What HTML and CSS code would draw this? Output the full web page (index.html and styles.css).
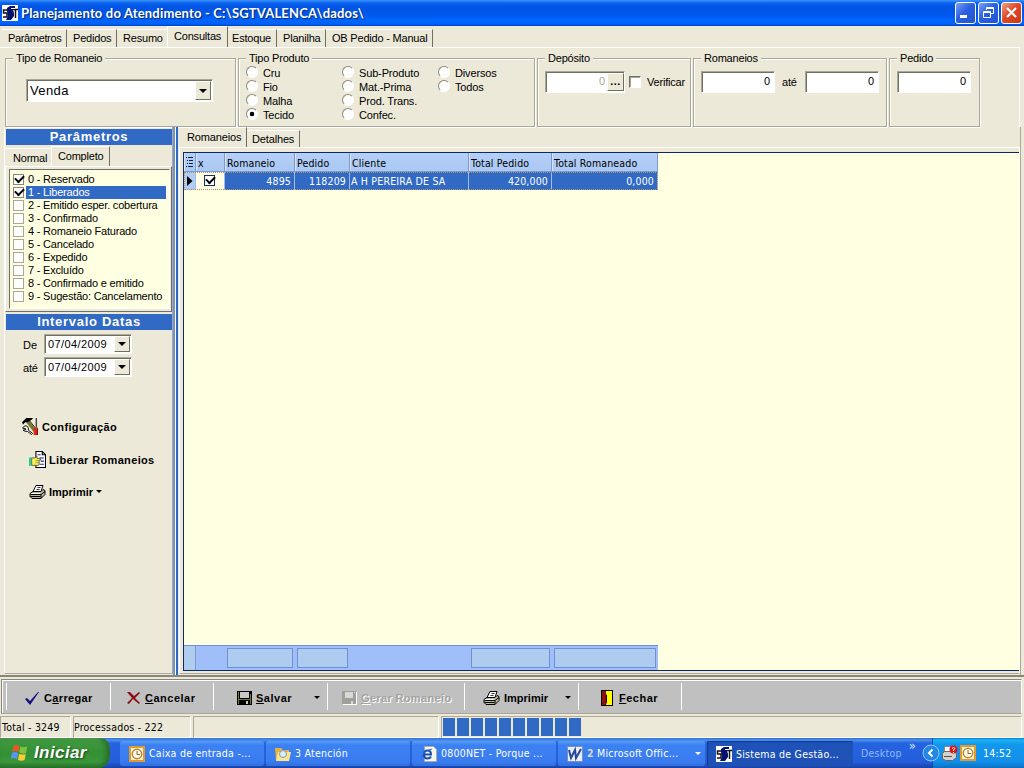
FILE: index.html
```html
<!doctype html>
<html lang="pt-BR">
  <head>
    <meta charset="UTF-8" />
    <meta name="viewport" content="width=device-width, initial-scale=1.0" />
    <title>Planejamento do Atendimento</title>
    <link rel="stylesheet" href="styles.css">
  </head>
  <body>
    <!-- símbolos reutilizados -->
    <svg class="defs" width="0" height="0">
      <symbol id="sgt" viewBox="0 0 16 16">
        <path fill="#fff" d="M0 0h16v16H0z" />
        <path fill="none" stroke="#101018" stroke-width="1.500" d="M5 5H1.500v3H5v4H1M11 4.500h5M13.500 4v9" />
        <path fill="#03106c" d="M5 3l3-2h5v3l-2 1 1 3v3l-3 4H4l1-2 1-2-1-5z" />
        <path stroke="#fff" d="M9 3.500h4" />
      </symbol>
      <symbol id="printer" viewBox="0 0 16 16">
        <path fill="#fff" stroke="#000" d="M6.500 1.500h7l-2 6h-8z" />
        <path stroke="#333" d="M8 3.500h3M7 5.500h3" />
        <path fill="#b9b8a8" stroke="#000" d="M.5 9.500l3-2h8l2-2 2 1v4l-4 4h-9l-2-2z" />
        <path fill="#fff" d="M2 9h9l-1 1H1z" />
        <path stroke="#000" fill="none" d="M1 10.500h10.500l4-3M11.500 10.500v4M1 12.500h10" />
        <path fill="#cc3" d="M8 11h2v1H8z" />
      </symbol>
      <symbol id="outlook" viewBox="0 0 16 16">
        <path fill="#fff3cf" stroke="#e09a2e" stroke-width="2" d="M1 1h14v14H1z" />
        <circle cx="8" cy="8" r="4.700" fill="#fffdf2" stroke="#b98432" stroke-width="1.500" />
        <path fill="none" stroke="#8a5a18" d="M8 5v3.500h3" />
      </symbol>
    </svg>

    <header class="titlebar">
      <svg class="app-icon" width="16" height="16"><use href="#sgt" /></svg>
      <h1>Planejamento do Atendimento - C:\SGTVALENCA\dados\</h1>
      <div class="win-buttons">
        <span class="win"><svg viewBox="0 0 19 19"><path fill="#fff" d="M4 12h7v3H4z" /></svg></span>
        <span class="win"><svg viewBox="0 0 19 19"><path fill="none" stroke="#fff" d="M7.500 7V4.500h7v6H12M7 5.500h8M4.500 8.500h7v6h-7zM4 9.500h8" /></svg></span>
        <span class="win close"><svg viewBox="0 0 19 19"><path stroke="#fff" stroke-width="2.200" d="M5 5l9 9M14 5l-9 9" /></svg></span>
      </div>
    </header>

    <nav class="main-tabs">
      <span class="t1">Parâmetros</span>
      <span class="t2">Pedidos</span>
      <span class="t3">Resumo</span>
      <span class="t4 on">Consultas</span>
      <span class="t5">Estoque</span>
      <span class="t6">Planilha</span>
      <span class="t7">OB Pedido - Manual</span>
    </nav>

    <section class="filters">
      <fieldset>
        <legend>Tipo de Romaneio</legend>
        <div class="combo big"><span>Venda</span><i class="drop"></i></div>
      </fieldset>
      <fieldset>
        <legend>Tipo Produto</legend>
        <div class="radios">
          <label><i></i>Cru</label>
          <label><i></i>Fio</label>
          <label><i></i>Malha</label>
          <label><i class="on"></i>Tecido</label>
          <label><i></i>Sub-Produto</label>
          <label><i></i>Mat.-Prima</label>
          <label><i></i>Prod. Trans.</label>
          <label><i></i>Confec.</label>
          <label><i></i>Diversos</label>
          <label><i></i>Todos</label>
        </div>
      </fieldset>
      <fieldset>
        <legend>Depósito</legend>
        <div class="fields">
          <div class="field dep"><span>0</span><b>...</b></div>
          <i class="box"></i>
          <span class="verif">Verificar</span>
        </div>
      </fieldset>
      <fieldset>
        <legend>Romaneios</legend>
        <div class="fields">
          <div class="field">0</div>
          <span class="ate">até</span>
          <div class="field">0</div>
        </div>
      </fieldset>
      <fieldset>
        <legend>Pedido</legend>
        <div class="fields"><div class="field">0</div></div>
      </fieldset>
    </section>

    <main class="work">
      <aside class="side">
        <h2>Parâmetros</h2>
        <nav class="side-tabs">
          <span>Normal</span>
          <span class="on">Completo</span>
        </nav>
        <div class="side-page">
          <ul class="checks">
            <li><i class="ok"></i><span>0 - Reservado</span></li>
            <li class="sel"><i class="ok"></i><span>1 - Liberados</span></li>
            <li><i></i><span>2 - Emitido esper. cobertura</span></li>
            <li><i></i><span>3 - Confirmado</span></li>
            <li><i></i><span>4 - Romaneio Faturado</span></li>
            <li><i></i><span>5 - Cancelado</span></li>
            <li><i></i><span>6 - Expedido</span></li>
            <li><i></i><span>7 - Excluído</span></li>
            <li><i></i><span>8 - Confirmado e emitido</span></li>
            <li><i></i><span>9 - Sugestão: Cancelamento</span></li>
          </ul>
        </div>
        <h2 class="second">Intervalo Datas</h2>
        <div class="dates">
          <span>De</span>
          <div class="combo"><span>07/04/2009</span><i class="drop"></i></div>
          <span>até</span>
          <div class="combo"><span>07/04/2009</span><i class="drop"></i></div>
        </div>
        <div class="actions">
          <div class="action cfg">
            <svg width="17" height="17" viewBox="0 0 16 16">
              <path stroke="#77772a" stroke-width="3" d="M5 3l7 9" />
              <path stroke="#000" stroke-width=".8" d="M7 2.500l6.500 8" />
              <path d="M0 4l4-4h6v1L7 3 5 4 3 4 1 6z" />
              <path stroke="#444" stroke-width="1.300" d="M13.500 0v9" />
              <path fill="#e02814" d="M11 9h4v7h-4z" />
              <path fill="#7c100a" d="M14 10h1v6h-1z" />
              <path fill="#fff" stroke="#000" stroke-width=".9" d="M.5 9.500l2-2h2l1.500 2v2l4 3-1 1-4-3H3l-2-1 2.500-.5V10z" />
            </svg>
            <span>Configuração</span>
          </div>
          <div class="action lib">
            <svg width="17" height="17" viewBox="0 0 16 16">
              <path fill="#fff" stroke="#000" d="M6.500.5h6l3 3v12h-9z" />
              <path fill="none" stroke="#000" d="M12.500.5v3h3" />
              <path stroke="#22a" d="M8 3.500h3M10 6.500h4M11 9.500h3M10 12.500h4" />
              <path fill="#f6f060" stroke="#55551a" stroke-width=".8" d="M2.500 6.500h3l2-1.500v2h3.500v1.500H9.500V13l-1 .5h-6z" />
              <path stroke="#88882a" stroke-width=".7" d="M6 9h3.500M6 11h3.500" />
              <path fill="#20d0a0" d="M0 6h2v8H0z" />
            </svg>
            <span>Liberar Romaneios</span>
          </div>
          <div class="action imp">
            <svg width="17" height="16"><use href="#printer" /></svg>
            <span>Imprimir</span><i class="arrow"></i>
          </div>
        </div>
      </aside>
      <div class="splitter"></div>

      <section class="content">
        <nav class="content-tabs">
          <span class="on">Romaneios</span>
          <span>Detalhes</span>
        </nav>
        <div class="content-page">
          <div class="grid">
            <div class="row head">
              <span class="ind"><svg width="8" height="10" viewBox="0 0 8 10"><path stroke="#123" d="M0 .5h1M2 .5h5M1 3.500h1M3 3.500h4M1 6.500h1M3 6.500h4M0 9.500h1M2 9.500h5" /></svg></span>
              <span class="c1">x</span>
              <span class="c2">Romaneio</span>
              <span class="c3">Pedido</span>
              <span class="c4">Cliente</span>
              <span class="c5">Total Pedido</span>
              <span class="c6">Total Romaneado</span>
            </div>
            <div class="row data">
              <span class="ind"><svg width="6" height="10" viewBox="0 0 6 10"><path d="M0 0l5.500 5L0 10z" /></svg></span>
              <span class="chk"><i class="ok"></i></span>
              <span class="num">4895</span>
              <span class="num c3">118209</span>
              <span class="cli">A H PEREIRA DE SA</span>
              <span class="num">420,000</span>
              <span class="num">0,000</span>
            </div>
            <div class="row foot">
              <span class="ind"></span>
              <span></span>
              <span><i></i></span>
              <span><i></i></span>
              <span></span>
              <span><i></i></span>
              <span><i></i></span>
            </div>
          </div>
        </div>
      </section>
    </main>

    <div class="toolbar">
      <div class="tool carregar">
        <svg width="15" height="14" viewBox="0 0 15 14"><path fill="#101080" d="M0 8l2-1 3 3 8-9 1 0-9 13z" /></svg>
        <span>C<u>a</u>rregar</span>
      </div>
      <div class="tool cancelar">
        <svg width="14" height="14" viewBox="0 0 14 14"><path fill="#8b0f16" d="M0 1h3l4 4 5-4 1 1-5 5 5 5-1 1-6-5-4 5-2-1 5-5z" /></svg>
        <span><u>C</u>ancelar</span>
      </div>
      <div class="tool salvar">
        <svg width="15" height="14" viewBox="0 0 15 14"><path d="M0 0h15v14H0z" /><path fill="#77772a" d="M1 1h1v12H1zM13 3h1v10h-1zM2 8h11v1H2z" /><path fill="#c8c8c8" d="M3 1h9v6H3zM9 10h2v3H9z" /></svg>
        <span><u>S</u>alvar</span><i class="arrow"></i>
      </div>
      <div class="tool gerar">
        <svg width="15" height="14" viewBox="0 0 15 14"><path fill="#fff" d="M1 1h14v13H1z" /><path fill="#a09f99" d="M0 0h14v13H0z" /><path fill="#d8d8d8" d="M3 1h8v6H3zM9 10h2v3H9zM12 1h1v1h-1z" /></svg>
        <span><u>G</u>erar Romaneio</span>
      </div>
      <div class="tool print">
        <svg width="17" height="16"><use href="#printer" /></svg>
        <span>Imprimir</span><i class="arrow"></i>
      </div>
      <div class="tool fechar">
        <svg width="12" height="16" viewBox="0 0 12 16"><path d="M0 0h12v16H0z" /><path fill="#ff0" d="M5 1h6v14H5z" /><path fill="#8b0f16" d="M1 1h4v3l1 1v8l-2 2H1z" /><path d="M5 5h1v7H5z" /></svg>
        <span><u>F</u>echar</span>
      </div>
    </div>

    <div class="statusbar">
      <span class="total">Total - 3249</span>
      <span class="proc">Processados - 222</span>
      <span></span>
      <div class="progress"><i></i><i></i><i></i><i></i><i></i><i></i><i></i><i></i><i></i><i></i></div>
    </div>

    <footer class="taskbar">
      <div class="start">
        <svg width="18" height="18" viewBox="0 0 18 18">
          <path fill="#e8572a" d="M3.500 2q3-2 6 0L8.500 8.300Q5.500 6 2.300 8z" />
          <path fill="#7cc33f" d="M10.300 2.500q3 1.500 7 0L16 9q-3 1.500-6.800-.5z" />
          <path fill="#5a94f4" d="M2 9q3-2 6.200.3L7 15.500Q4 13 .8 15z" />
          <path fill="#f8cc36" d="M9 9.700q3 1.500 6.800.3L14.600 16q-3 1.500-6.600 0z" />
        </svg>
        <span>Iniciar</span>
      </div>
      <div class="tasks">
        <div class="task"><svg width="16" height="16"><use href="#outlook" /></svg><span class="k1">Caixa de entrada -...</span></div>
        <div class="task">
          <svg width="16" height="16" viewBox="0 0 16 16"><path fill="#e5b23c" d="M0 2h6l2 2h6v10H1z" /><path fill="#fbe48a" d="M3 6h13l-2 9H1z" /><circle cx="8" cy="8" r="3.500" fill="#d9efff" stroke="#8298b4" /></svg>
          <span class="k2">3 Atención</span>
        </div>
        <div class="task">
          <svg width="16" height="16" viewBox="0 0 16 16"><path fill="#f7f6ea" stroke="#aaa" d="M3.500.5h9l3 3v12h-12z" /><path fill="none" stroke="#1550b0" stroke-width="2" d="M3 8.500h7q0-4-3.500-4T3 8.500q0 4 3.500 4 2.500 0 3.500-2" /><path fill="none" stroke="#2c70d0" d="M0 13Q1 5 11 3" /></svg>
          <span class="k3">0800NET - Porque ...</span>
        </div>
        <div class="task">
          <svg width="16" height="16" viewBox="0 0 16 16"><path fill="#e9eef8" stroke="#7890c0" d="M.5.5h15v15H.5z" /><path fill="none" stroke="#234a9c" stroke-width="2" d="M2 4l2 8 4-8 1 8 5-9" /></svg>
          <span class="k4"><b>2</b> Microsoft Offic...</span><i class="arrow"></i>
        </div>
        <div class="task active"><svg width="16" height="16"><use href="#sgt" /></svg><span class="k5">Sistema de Gestão...</span></div>
      </div>
      <div class="desk">Desktop<b>»</b></div>
      <div class="tray">
        <svg class="hide-btn" width="18" height="18" viewBox="0 0 18 18"><circle cx="9" cy="9" r="8" fill="#2487e6" stroke="#8fc8fa" /><path fill="none" stroke="#fff" stroke-width="2" d="M10.500 5.500L7 9l3.500 3.500" /></svg>
        <svg width="16" height="16" viewBox="0 0 16 16"><path fill="#fff" stroke="#888" d="M2.500 1.500h6v6h-6z" /><path fill="#d5d2cc" stroke="#666" d="M.5 8.500l2-2h9l3 2v4l-4 3h-7l-3-2z" /><path stroke="#555" d="M2 11.500h8" /><circle cx="11.500" cy="4.500" r="4" fill="#d81818" /><path fill="none" stroke="#fff" d="M10 3.500q1.500-2 3 0l-1.500 1.500v1M11.500 7v1" /></svg>
        <svg width="16" height="16"><use href="#outlook" /></svg>
        <span>14:52</span>
      </div>
    </footer>
  </body>
</html>
```

FILE: styles.css
```css
* {
  margin: 0;
  padding: 0;
  box-sizing: border-box;
}

body {
  width: 1024px;
  height: 768px;
  overflow: hidden;
  display: flex;
  flex-direction: column;
  background: #ece9d8;
  color: #000;
  font: 11px/14px 'Liberation Sans', Arial, sans-serif;
  letter-spacing: -0.2px;
  white-space: nowrap;
}

i {
  font-style: normal;
}

svg {
  display: block;
  flex: none;
}

.defs {
  position: absolute;
}

/* barra de título */
.titlebar {
  height: 26px;
  flex: none;
  display: flex;
  align-items: center;
  padding: 0 2px;
  background: linear-gradient(#3c94ff 0, #0a62ee 3px, #0054e3 7px, #0058ec 15px, #0066ff 21px, #0061f4 24px, #003fc8 26px);
}

.titlebar h1 {
  flex: 1;
  margin-left: 3px;
  color: #fff;
  font: bold 13px/18px Lato, sans-serif;
  letter-spacing: 0.18px;
  text-shadow: 1px 1px 1px #0a2a7a;
}

.win-buttons {
  display: flex;
  gap: 2px;
}

.win {
  width: 21px;
  height: 22px;
  border: 1px solid #fff;
  border-radius: 3px;
  background: linear-gradient(135deg, #7aa2f5, #2a5fe0 45%, #2356d0);
}

.win.close {
  background: linear-gradient(135deg, #f0a088, #e0492a 45%, #c83a14);
}

/* abas principais */
.main-tabs {
  height: 21px;
  flex: none;
  display: flex;
  align-items: flex-end;
  padding-left: 2px;
}

.main-tabs span {
  height: 18px;
  padding: 1px 0 0 6px;
  border-top: 1px solid #fff;
  border-right: 1px solid #716f64;
}

.main-tabs .on {
  height: 21px;
  padding-top: 2px;
  border-left: 1px solid #fff;
}

.t1 { width: 65px; letter-spacing: -0.35px; }
.t2 { width: 50px; }
.main-tabs .t3 { width: 50px; border-right: 0; }
.t4 { width: 61px; }
.main-tabs .t5 { width: 49px; padding-left: 4px; }
.t6 { width: 49px; }
.t7 { width: 107px; }

/* filtros */
.filters {
  height: 80px;
  flex: none;
  display: grid;
  grid-template-columns: 231px 297px 154px 194px 91px;
  column-gap: 2px;
  padding: 4px 0 0 5px;
  margin-right: 4px;
  border-top: 1px solid #fff;
  border-right: 1px solid #fff;
}

.filters fieldset {
  min-width: 0;
  height: 75px;
  border: 1px solid #aca899;
  box-shadow: 1px 1px 0 #fff, inset 1px 1px 0 #fff;
}

.filters legend {
  height: 13px;
  margin-left: 7px;
  padding: 0 3px;
  line-height: 12px;
  background: #ece9d8;
}

.combo {
  display: flex;
  width: 88px;
  height: 20px;
  background: #fff;
  border: 1px solid;
  border-color: #aca899 #fff #fff #aca899;
  box-shadow: inset 1px 1px 0 #716f64;
}

.combo span {
  flex: 1;
  padding: 2px 0 0 3px;
  letter-spacing: 0.4px;
}

.combo.big {
  width: 187px;
  height: 23px;
  margin: 14px 0 0 20px;
  font: 13px/17px 'Liberation Sans', Arial, sans-serif;
}

.drop {
  width: 16px;
  margin: 1px;
  display: flex;
  align-items: center;
  justify-content: center;
  background: #ece9d8;
  border: 1px solid;
  border-color: #fff #716f64 #716f64 #fff;
}

.drop::after,
.arrow {
  content: '';
  border: 4px solid transparent;
  border-top-color: #000;
  border-bottom: 0;
}

.radios {
  display: grid;
  grid-auto-flow: column;
  grid-template-rows: repeat(4, 14px);
  grid-template-columns: 96px 96px 90px;
  margin: 1px 0 0 7px;
  letter-spacing: -0.15px;
}

.radios label {
  display: flex;
  gap: 5px;
}

.radios i {
  width: 12px;
  height: 12px;
  border: 1px solid;
  border-color: #8a877a #fff #fff #8a877a;
  border-radius: 50%;
  background: #fff;
}

.radios i.on {
  background: radial-gradient(circle, #000 0 2px, #fff 2.6px);
}

.fields {
  display: flex;
  align-items: center;
  margin: 6px 0 0 7px;
}

.field {
  width: 74px;
  height: 22px;
  padding: 2px 4px 0 0;
  text-align: right;
  background: #fff;
  border: 1px solid;
  border-color: #aca899 #fff #fff #aca899;
  box-shadow: inset 1px 1px 0 #716f64;
}

.field.dep {
  display: flex;
  justify-content: flex-end;
  width: 80px;
  padding: 1px 0 0;
  color: #aca899;
}

.dep span {
  padding: 1px 2px 0 0;
}

.dep b {
  width: 17px;
  height: 18px;
  color: #000;
  text-align: center;
  letter-spacing: 0.5px;
  background: #ece9d8;
  border: 1px solid;
  border-color: #fff #716f64 #716f64 #fff;
}

.box {
  width: 12px;
  height: 12px;
  margin: 0 6px 0 4px;
  background: #fff;
  border: 1px solid;
  border-color: #716f64 #fff #fff #716f64;
  box-shadow: inset 1px 1px 0 #aca899;
}

.verif {
  padding-bottom: 1px;
}

.ate {
  width: 30px;
  padding-left: 7px;
}

/* área de trabalho */
.work {
  height: 550px;
  flex: none;
  display: flex;
  border-bottom: 2px solid #8a877a;
}

.side {
  width: 169px;
  margin-left: 4px;
  display: flex;
  flex-direction: column;
  border-left: 1px solid #fff;
  border-right: 1px solid #aca899;
  border-bottom: 1px solid #aca899;
  height: 547px;
}

.side h2 {
  height: 16px;
  flex: none;
  margin: 2px 0 0 1px;
  color: #fff;
  text-align: center;
  font: bold 13px/16px 'Liberation Sans', Arial, sans-serif;
  letter-spacing: 0.7px;
  background: #316ac5;
}

.side h2.second {
  margin-top: 2px;
}

.side-tabs {
  height: 21px;
  display: flex;
  align-items: flex-end;
}

.side-tabs span {
  height: 18px;
  width: 46px;
  padding: 2px 0 0 8px;
  border-top: 1px solid #fff;
}

.side-tabs .on {
  width: 59px;
  height: 20px;
  padding: 2px 0 0 6px;
  border-left: 1px solid #fff;
  border-right: 1px solid #716f64;
}

.side-page {
  height: 146px;
  padding: 2px 1px 2px 3px;
  border: 1px solid;
  border-color: #fff #716f64 #716f64 #fff;
}

.checks {
  height: 140px;
  padding: 3px 3px 0;
  list-style: none;
  background: #ffffe1;
  border: 1px solid;
  border-color: #716f64 #fff #fff #716f64;
}

.checks li {
  height: 13px;
  display: flex;
  gap: 2px;
}

.checks i {
  width: 11px;
  height: 11px;
  margin-top: 1px;
  background-color: #fff;
  border: 1px solid #aca899;
}

.checks i.ok {
  border-color: #8a877a;
}

.checks span {
  flex: 1;
  padding-left: 2px;
  line-height: 13px;
}

.checks .sel span {
  color: #fff;
  background: #316ac5;
}

.ok {
  position: relative;
}

.ok::after {
  content: '';
  position: absolute;
  left: 1px;
  top: 0;
  width: 7px;
  height: 4px;
  border: solid #000;
  border-width: 0 0 2px 2px;
  transform: rotate(-45deg);
}

.dates {
  display: grid;
  grid-template-columns: 21px 88px;
  grid-template-rows: 20px 20px;
  row-gap: 3px;
  margin: 4px 0 0 18px;
}

.dates > span {
  padding-top: 4px;
}

.dates > span:first-child {
  letter-spacing: 0;
}

.actions {
  margin-top: 41px;
  font-weight: bold;
  letter-spacing: 0.35px;
}

.action {
  display: flex;
  align-items: center;
  gap: 3px;
  height: 17px;
}

.cfg { margin-left: 17px; }
.lib { margin: 16px 0 0 24px; }
.imp { margin: 15px 0 0 24px; letter-spacing: 0; }

.arrow {
  border-width: 3px 3px 0;
}

.splitter {
  width: 5px;
  height: 548px;
  background: linear-gradient(90deg, #6f93d4 0 2px, #fff 2px 3px, #316ac5 3px 5px);
}

.content {
  flex: 1;
  padding-left: 1px;
  margin-right: 3px;
  border-right: 1px solid #aca899;
}

.content-tabs {
  height: 20px;
  display: flex;
  align-items: flex-end;
}

.content-tabs span {
  width: 53px;
  height: 17px;
  padding: 1px 0 0 5px;
  border-top: 1px solid #fff;
  border-right: 1px solid #716f64;
  letter-spacing: -0.15px;
}

.content-tabs .on {
  width: 68px;
  height: 20px;
  padding: 2px 0 0 8px;
}

.content-page {
  height: 527px;
  padding: 4px 0 0 3px;
  border: 1px solid #fff;
  border-bottom-color: #aca899;
}

.grid {
  height: 519px;
  display: flex;
  flex-direction: column;
  background: #ffffe1;
  border: 1px solid #0b2a63;
  border-right: 0;
  font-family: 'DejaVu Sans Condensed', 'DejaVu Sans', sans-serif;
  font-size: 10.5px;
  letter-spacing: 0.15px;
}

.row {
  width: 474px;
  display: grid;
  grid-template-columns: 12px 29px 70px 55px 119px 83px 106px;
}

.head {
  height: 19px;
  background: linear-gradient(#b5d0f7, #aac8f3);
  border-bottom: 1px solid #7b9ad0;
}

.head span {
  padding: 3px 0 0 2px;
  border-right: 1px solid #7b9ad0;
  box-shadow: inset 1px 0 0 #d5e4fb;
}

.head .ind {
  padding: 4px 0 0 2px;
}

.data {
  height: 18px;
  color: #fff;
  background: #316ac5;
  outline: 1px dotted #b0925f;
  outline-offset: -1px;
}

.data span {
  padding: 2px 3px 0;
  border-right: 1px solid #9fbbe8;
}

.data .num {
  text-align: right;
}

.data .cli {
  padding-left: 1px;
  letter-spacing: 0.2px;
}

.data .ind {
  padding: 4px 0 0 3px;
  background: #b0cdf5;
}

.data .chk {
  padding: 3px 0 0 8px;
  background: #ffffe8;
}

.chk i {
  display: block;
  width: 11px;
  height: 11px;
  background: #fff;
  border: 1px solid #163066;
}

.foot {
  height: 25px;
  margin-top: auto;
  background: #a0bff8;
  border-top: 1px solid #6f90d4;
}

.foot span {
  padding: 2px;
}

.foot .ind {
  background: #b0cdf0;
  border-right: 1px solid #7b9ad0;
}

.foot i {
  display: block;
  height: 20px;
  background: #aecbf0;
  border: 1px solid #6f90d4;
}

/* barra de ferramentas */
.toolbar {
  height: 35px;
  flex: none;
  display: grid;
  grid-template-columns: 104px 103px 114px 137px 114px 103px;
  padding: 3px 0 3px 5px;
  margin: 2px 2px 0 1px;
  background: #c0c0c0;
  border: 1px solid;
  border-color: #8a877a #fff #aca899 #8a877a;
  box-shadow: inset 1px 1px 0 #fff;
  font-weight: bold;
}

.tool {
  display: flex;
  align-items: center;
  padding-top: 2px;
  border-right: 1px solid #fff;
}

.tool:first-child {
  box-shadow: -1px 0 0 #fff;
}

.tool span {
  margin-left: 4px;
  letter-spacing: 0.5px;
}

.carregar { padding-left: 18px; }
.tool.carregar span { letter-spacing: 0.35px; }
.cancelar { padding-left: 16px; }
.salvar { padding-left: 23px; }
.gerar { padding-left: 14px; color: #a4a49f; text-shadow: 1px 1px 0 #fff; }
.tool.gerar span { letter-spacing: 0.35px; }
.print { padding-left: 18px; }
.tool.print span { letter-spacing: 0; }
.fechar { padding-left: 22px; }

.tool .arrow {
  margin: 0 7px 0 auto;
}

.fechar span {
  margin-left: 6px;
}

/* barra de status */
.statusbar {
  height: 22px;
  flex: none;
  margin-top: 2px;
  display: grid;
  grid-template-columns: 71px 118px 246px 1fr;
  column-gap: 2px;
  margin-right: 2px;
  font-family: 'DejaVu Sans Condensed', 'DejaVu Sans', sans-serif;
  font-size: 10.5px;
  letter-spacing: 0.2px;
}

.statusbar > * {
  padding: 3px 0 0 1px;
  border: 1px solid;
  border-color: #aca899 #fff #fff #aca899;
}

.statusbar .proc {
  padding-left: 0;
}

.statusbar .progress {
  display: flex;
  gap: 2px;
  padding: 1px 0 0 1px;
}

.progress i {
  width: 12px;
  height: 18px;
  background: #316ac5;
}

/* barra de tarefas */
.taskbar {
  height: 30px;
  flex: none;
  display: flex;
  color: #fff;
  background: linear-gradient(#3168d5 0, #4993e6 2px, #2663e0 5px, #245edb 24px, #1941a5 30px);
  font-family: 'DejaVu Sans Condensed', 'DejaVu Sans', sans-serif;
  font-size: 10.5px;
  letter-spacing: 0.25px;
}

.start {
  width: 110px;
  display: flex;
  align-items: center;
  padding-left: 10px;
  gap: 6px;
  border-radius: 0 10px 12px 0;
  background: linear-gradient(#68b068 0, #3f9a3f 3px, #358f35 15px, #3a973a 24px, #25732a 30px);
  box-shadow: inset -4px 0 5px #2a6d2a;
  font: italic bold 17px/22px 'Liberation Sans', Arial, sans-serif;
  letter-spacing: 0.4px;
  text-shadow: 1px 1px 2px #1c4a1c;
}

.tasks {
  display: grid;
  grid-template-columns: 144px 144px 144px 147px 146px;
  column-gap: 2px;
  padding: 3px 0 2px;
  margin-left: 10px;
}

.task {
  display: flex;
  align-items: center;
  padding-left: 9px;
  gap: 4px;
  border-radius: 2px;
  background: linear-gradient(#5a9cf8 0, #3c81f3 4px, #3a7cef 20px, #3070e0);
}

.task span {
  padding-bottom: 2px;
}

.task.active {
  background: #1e52b7;
  box-shadow: inset 1px 1px 1px #123a8c;
}

.task.active span {
  padding-bottom: 0;
}

.task .arrow {
  margin: 0 4px 0 auto;
  border-top-color: #fff;
}

.k4 b {
  color: #d8d8cc;
}

.desk {
  width: 79px;
  display: flex;
  padding: 8px 0 0 8px;
  color: #8fbaff;
}

.desk b {
  margin: -7px 0 0 7px;
  color: #cfe0ff;
  font-weight: normal;
  font-size: 13px;
}

.tray {
  flex: 1;
  display: flex;
  align-items: center;
  gap: 2px;
  background: linear-gradient(#0d79d6 0, #18b5f5 2px, #1298ec 6px, #118eea 24px, #0d70c0 30px);
  border-left: 1px solid #0d4fa8;
}

.hide-btn {
  margin-left: -11px;
}

.tray span {
  margin-left: 5px;
}
```
